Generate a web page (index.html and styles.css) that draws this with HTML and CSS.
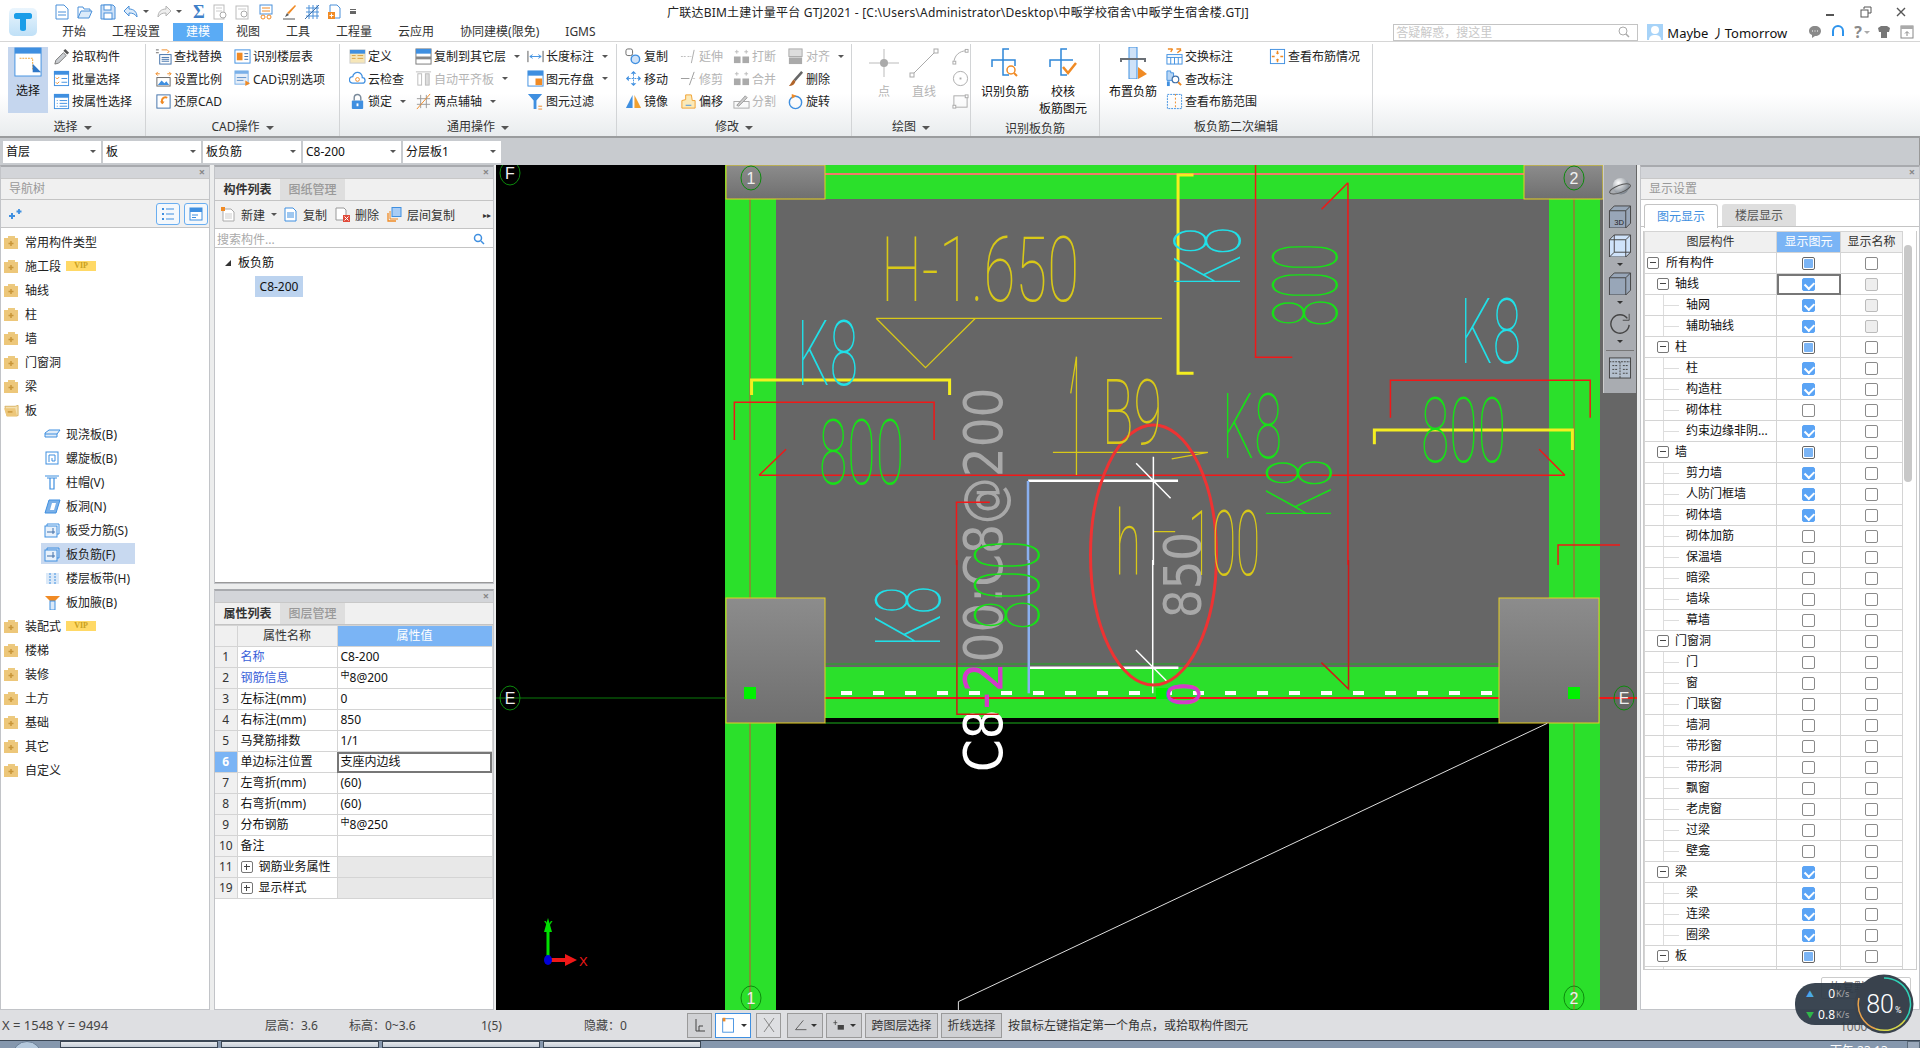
FILE: index.html
```html
<!DOCTYPE html>
<html lang="zh-CN">
<head>
    <meta charset="UTF-8">
    <title>广联达BIM土建计量平台 GTJ2021</title>
    <link rel="stylesheet" href="styles.css">
</head>
<body>
<svg class="sprites" aria-hidden="true">
    <symbol id="i-pick" viewBox="0 0 18 18"><path d="M2 17l1-4 8-8 3 3-8 8z" fill="#c9ccd0" stroke="#777"/><path d="M11 3l2-2 4 4-2 2z" fill="#555"/></symbol>
    <symbol id="i-batch" viewBox="0 0 18 18"><rect x="1.5" y="1.5" width="15" height="15" fill="#fff" stroke="#3f8fe0"/><rect x="1" y="1" width="16" height="4" fill="#3f8fe0"/><path d="M3 8l1.5 1.500 2-2M3 13l1.500 1.500 2-2" fill="none" stroke="#f08a24"/><path d="M9 9h6M9 13h6" stroke="#3f8fe0"/></symbol>
    <symbol id="i-attr" viewBox="0 0 18 18"><rect x="1.500" y="1.500" width="15" height="15" fill="#fff" stroke="#3f8fe0"/><rect x="1" y="1" width="16" height="4" fill="#3f8fe0"/><path d="M4 8h1M4 11h1M4 14h1M7 8h8M7 11h8M7 14h8" stroke="#3f8fe0"/></symbol>
    <symbol id="i-find" viewBox="0 0 18 18"><path d="M1 2h3M1 5h3" stroke="#666"/><path d="M7 2h6l2 2-2 1" fill="none" stroke="#f08a24"/><rect x="5" y="7" width="12" height="10" fill="#fff" stroke="#3f6fa8"/><path d="M7 10h8M7 12h8M7 14h8" stroke="#3f6fa8"/></symbol>
    <symbol id="i-scale" viewBox="0 0 18 18"><path d="M1 4h4M3 2l-2 2 2 2M17 4h-4M15 2l2 2-2 2" fill="none" stroke="#f08a24"/><rect x="2" y="8" width="14" height="9" fill="#fff" stroke="#666"/><path d="M3 16l4-5 3 3 2-2 3 4z" fill="#3f8fe0"/></symbol>
    <symbol id="i-restore" viewBox="0 0 18 18"><rect x="2" y="2" width="14" height="14" fill="#fff" stroke="#3f6fa8"/><path d="M13 5c-4-2-7 2-5 6" fill="none" stroke="#f08a24" stroke-width="2"/><path d="M5 9l3 3 2-3z" fill="#f08a24"/></symbol>
    <symbol id="i-floor" viewBox="0 0 18 18"><rect x="1" y="2" width="16" height="14" fill="#fff" stroke="#3f8fe0"/><rect x="3" y="5" width="6" height="8" fill="#f08a24"/><path d="M11 6h4M11 9h4M11 12h4" stroke="#3f6fa8"/></symbol>
    <symbol id="i-cad" viewBox="0 0 18 18"><rect x="1" y="1" width="14" height="14" fill="#e6eef8" stroke="#7ab0e8"/><rect x="1" y="1" width="14" height="3" fill="#7ab0e8"/><path d="M3 8h10M3 11h7" stroke="#5a8fca"/><path d="M12 11l5 3-5 3z" fill="#f08a24"/></symbol>
    <symbol id="i-define" viewBox="0 0 18 18"><rect x="1" y="2" width="16" height="14" fill="#f6e6b8" stroke="#ccc"/><rect x="1" y="2" width="16" height="4" fill="#3f8fe0"/><path d="M9 8h6M9 11h6M3 8h4M3 11h4" stroke="#d8a040"/></symbol>
    <symbol id="i-cloud" viewBox="0 0 18 18"><path d="M4 14a3.500 3.500 0 0 1 0-7 5 5 0 0 1 10 1 3 3 0 0 1 0 6z" fill="#fff" stroke="#3f8fe0" stroke-width="1.300"/><circle cx="9" cy="10" r="2" fill="none" stroke="#f08a24"/></symbol>
    <symbol id="i-lock" viewBox="0 0 18 18"><rect x="3" y="8" width="12" height="9" rx="1" fill="#3f8fe0"/><path d="M5.500 8V5a3.500 3.500 0 0 1 7 0v3" fill="none" stroke="#7a8a9a" stroke-width="1.500"/><rect x="8" y="11" width="2" height="3" fill="#fff"/></symbol>
    <symbol id="i-copyto" viewBox="0 0 18 18"><rect x="1" y="1" width="16" height="16" fill="#fff" stroke="#777"/><rect x="1" y="1" width="16" height="5" fill="#3f8fe0"/><rect x="1" y="9" width="16" height="3" fill="#888"/></symbol>
    <symbol id="i-align" viewBox="0 0 18 18"><path d="M1 2h16" stroke="#bbb"/><rect x="3" y="4" width="4" height="12" fill="none" stroke="#bbb"/><rect x="11" y="4" width="4" height="12" fill="#ddd" stroke="#bbb"/></symbol>
    <symbol id="i-axis" viewBox="0 0 18 18"><path d="M2 6h14M2 12h14M6 2v14M12 2v14" stroke="#999"/><path d="M2 17L16 1" stroke="#f08a24"/></symbol>
    <symbol id="i-dim" viewBox="0 0 18 18"><path d="M1 3v12M17 3v12" stroke="#555"/><path d="M3 9h12M3 9l3-2M3 9l3 2M15 9l-3-2M15 9l-3 2" stroke="#3f8fe0" fill="none"/></symbol>
    <symbol id="i-savepic" viewBox="0 0 18 18"><rect x="1" y="1" width="16" height="16" fill="#fff" stroke="#3f8fe0"/><rect x="1" y="1" width="16" height="5" fill="#3f8fe0"/><rect x="9" y="9" width="7" height="7" fill="#f08a24"/></symbol>
    <symbol id="i-filter" viewBox="0 0 18 18"><path d="M1 1h15l-6 7v9h-3V8z" fill="#3f8fe0"/><path d="M12 14h4M12 17h4" stroke="#f08a24"/></symbol>
    <symbol id="i-copy" viewBox="0 0 18 18"><rect x="1" y="1" width="7" height="7" rx="2" fill="#fff" stroke="#666"/><circle cx="11" cy="12" r="4.500" fill="#cfe2f8" stroke="#3f8fe0" stroke-width="1.500"/></symbol>
    <symbol id="i-move" viewBox="0 0 18 18"><path d="M9 1l3 3H6zM9 17l-3-3h6zM1 9l3-3v6zM17 9l-3 3V6z" fill="#3f8fe0"/><path d="M9 4v10M4 9h10" stroke="#3f8fe0" stroke-dasharray="2 1"/></symbol>
    <symbol id="i-mirror" viewBox="0 0 18 18"><path d="M8 2v14H1z" fill="#3f8fe0"/><path d="M10 2v14h7z" fill="#f0a030"/></symbol>
    <symbol id="i-extend" viewBox="0 0 18 18"><path d="M1 9h5M8 9h4" stroke="#bbb" stroke-dasharray="2 1"/><path d="M15 2l-3 14" stroke="#aaa"/></symbol>
    <symbol id="i-trim" viewBox="0 0 18 18"><path d="M1 9h9" stroke="#999"/><path d="M15 2l-5 14" stroke="#999"/><path d="M12 9h4" stroke="#ccc"/></symbol>
    <symbol id="i-offset" viewBox="0 0 18 18"><path d="M2 16V8l4-1V2h6l1 6h3v8z" fill="#fbe9b8" stroke="#f0a030"/><path d="M6 13h6" stroke="#3f8fe0"/></symbol>
    <symbol id="i-break" viewBox="0 0 18 18"><rect x="1" y="9" width="7" height="7" fill="#aaa"/><rect x="10" y="9" width="7" height="7" fill="#aaa"/><path d="M4 2v4M2 4h4M14 2v4M12 4h4" stroke="#bbb"/></symbol>
    <symbol id="i-split" viewBox="0 0 18 18"><rect x="1" y="9" width="16" height="7" fill="none" stroke="#aaa"/><path d="M4 13l9-10 2 2-9 9z" fill="#ccc" stroke="#999"/></symbol>
    <symbol id="i-alignr" viewBox="0 0 18 18"><rect x="2" y="1" width="14" height="8" fill="#ddd" stroke="#aaa"/><rect x="2" y="10" width="14" height="7" fill="#aaa"/></symbol>
    <symbol id="i-del" viewBox="0 0 18 18"><path d="M15 1l2 2-8 9-2-2z" fill="#666"/><path d="M7 10l2 2c-1 4-4 5-7 5 2-2 3-5 5-7z" fill="#b0642a"/></symbol>
    <symbol id="i-rotate" viewBox="0 0 18 18"><circle cx="9" cy="10" r="6.500" fill="none" stroke="#3f8fe0" stroke-width="1.500"/><path d="M5 1l5 2-5 3z" fill="#f08a24"/></symbol>
    <symbol id="i-arc" viewBox="0 0 18 18"><path d="M2 16C2 8 8 3 15 3" fill="none" stroke="#aaa"/><rect x="1" y="14" width="3" height="3" fill="#fff" stroke="#aaa"/><rect x="14" y="1.500" width="3" height="3" fill="#fff" stroke="#aaa"/></symbol>
    <symbol id="i-circle" viewBox="0 0 18 18"><circle cx="9" cy="9" r="7.500" fill="none" stroke="#aaa"/><rect x="8" y="8" width="2" height="2" fill="#aaa"/></symbol>
    <symbol id="i-rect" viewBox="0 0 18 18"><rect x="2" y="3" width="14" height="12" fill="none" stroke="#aaa"/><rect x="1" y="13" width="3" height="3" fill="#fff" stroke="#aaa"/><rect x="14" y="2" width="3" height="3" fill="#fff" stroke="#aaa"/></symbol>
    <symbol id="i-swap" viewBox="0 0 18 18"><path d="M2 1h5M7 1l-2 3M16 1h-5M12 5l4-3" fill="none" stroke="#f08a24" stroke-width="1.500"/><rect x="1" y="7" width="16" height="10" fill="#fff" stroke="#3f8fe0"/><path d="M1 10h16M5 10v7M9 10v7M13 10v7" stroke="#3f8fe0"/></symbol>
    <symbol id="i-check" viewBox="0 0 18 18"><path d="M1 1h4v2h3v8H1z" fill="#b8d6f5" stroke="#3f8fe0"/><path d="M1 12h3v5H1z" fill="#3f8fe0"/><circle cx="10" cy="10" r="3.500" fill="#fff" stroke="#3f6fa8" stroke-width="1.300"/><path d="M13 13l3 3" stroke="#f08a24" stroke-width="2"/></symbol>
    <symbol id="i-range" viewBox="0 0 18 18"><rect x="1.500" y="1.500" width="15" height="15" fill="none" stroke="#3f8fe0" stroke-dasharray="2 1"/><path d="M10 1v16" stroke="#f08a24" stroke-dasharray="2 2"/></symbol>
    <symbol id="i-state" viewBox="0 0 18 18"><rect x="1.500" y="1.500" width="15" height="15" fill="#fff" stroke="#3f8fe0"/><path d="M9 3v3M9 12v3M3 9h3M12 9h3" stroke="#f08a24" stroke-width="1.500"/><path d="M9 7l-2-2h4zM9 11l-2 2h4z" fill="#f08a24"/></symbol>
    <symbol id="i-folder" viewBox="0 0 15 13"><rect x="4" y="0" width="7" height="2" fill="#ecca80"/><rect x="0" y="2" width="14" height="11" fill="#edc77a"/><path d="M7 5v5M4.500 7.500h5" stroke="#c89538" stroke-width="1.500"/></symbol>
    <symbol id="i-folderopen" viewBox="0 0 16 13"><path d="M1 2h11l3-1v11H3z" fill="#f4e0b0" stroke="#d9b262"/><path d="M0 4h12l2 9H3z" fill="#edc77a"/><path d="M4 8h5" stroke="#c89538" stroke-width="1.500"/></symbol>
    <symbol id="i-slab" viewBox="0 0 17 15"><path d="M1 6l4-3h11l-3 4v3H1z" fill="#e0ecf8" stroke="#3f8fe0"/><path d="M1 7h12" stroke="#3f8fe0"/></symbol>
    <symbol id="i-spiral" viewBox="0 0 17 15"><rect x="2" y="1" width="12" height="12" fill="#fff" stroke="#3f8fe0"/><path d="M5 11V4h6v6H8V7" fill="none" stroke="#3f8fe0"/></symbol>
    <symbol id="i-cap" viewBox="0 0 17 15"><path d="M1 1h14M3 3h10M6 3v11h4V3" fill="none" stroke="#3f8fe0" stroke-width="1.200"/></symbol>
    <symbol id="i-hole" viewBox="0 0 17 15"><path d="M1 14L5 1h11l-4 13z" fill="#7ab0e8" stroke="#3f8fe0"/><path d="M6 11l2-7h4l-2 7z" fill="#fff"/></symbol>
    <symbol id="i-rebar" viewBox="0 0 17 15"><rect x="1" y="3" width="12" height="11" fill="#e8f1fb" stroke="#3f8fe0"/><path d="M3 3V1h12v10h-2" fill="none" stroke="#3f8fe0"/><path d="M3 9h8M9 5v6" stroke="#3f6fa8"/></symbol>
    <symbol id="i-band" viewBox="0 0 17 15"><rect x="2" y="2" width="13" height="11" fill="#dbe9f8"/><path d="M6 2v11M11 2v11" stroke="#3f8fe0" stroke-dasharray="2 1"/></symbol>
    <symbol id="i-haunch" viewBox="0 0 17 15"><path d="M1 1h15l-5 5H6z" fill="#f08a24"/><rect x="6" y="6" width="5" height="9" fill="#dbe9f8" stroke="#3f8fe0"/></symbol>
    <symbol id="i-new" viewBox="0 0 15 15"><path d="M2 2h8l3 3v9H2z" fill="#fff" stroke="#aaa"/><path d="M4 7h7M4 9h7M4 11h7" stroke="#ccc"/><rect x="0" y="0" width="4" height="4" fill="#f08a24"/></symbol>
    <symbol id="i-doc" viewBox="0 0 15 15"><path d="M2 1h8l3 3v10H2z" fill="#fff" stroke="#3f8fe0"/><path d="M4 6h7M4 8h7M4 10h7" stroke="#3f8fe0"/></symbol>
    <symbol id="i-remove" viewBox="0 0 15 15"><path d="M1 1h8l2 2v10H1z" fill="#fff" stroke="#999"/><rect x="8" y="8" width="7" height="7" fill="#e04a3a"/><path d="M9.500 9.500l4 4M13.500 9.500l-4 4" stroke="#fff"/></symbol>
    <symbol id="i-floorcopy" viewBox="0 0 15 15"><path d="M1 6v8h8" fill="none" stroke="#f08a24" stroke-width="1.300"/><path d="M3 4v8h8" fill="none" stroke="#f08a24"/><rect x="5" y="0.500" width="9" height="9" fill="#a9cdf6" stroke="#3f8fe0"/></symbol>
</svg>

<header class="titlebar">
    <div class="quick">
        <svg class="qi" viewBox="0 0 16 16"><path d="M2 1h8l4 4v10H2z" fill="#fff" stroke="#4a90d9"/><path d="M4 8h8M4 11h8" stroke="#4a90d9"/></svg>
        <svg class="qi" viewBox="0 0 16 16"><path d="M1 14V3h5l1 2h6v2" fill="none" stroke="#4a90d9"/><path d="M1 14l3-7h11l-3 7z" fill="#dcebfa" stroke="#4a90d9"/></svg>
        <svg class="qi" viewBox="0 0 16 16"><path d="M1 1h12l2 2v12H1z" fill="#cfe2f8" stroke="#4a90d9"/><rect x="4" y="1" width="7" height="5" fill="#fff" stroke="#4a90d9"/><rect x="4" y="9" width="8" height="6" fill="#fff" stroke="#4a90d9"/></svg>
        <svg class="qi" viewBox="0 0 16 16"><path d="M6 2L1 7l5 5V9c4 0 6 1 8 4 0-5-3-8-8-8z" fill="#dcebfa" stroke="#4a90d9"/></svg>
        <span class="caret qc1"></span>
        <svg class="qi" viewBox="0 0 16 16"><path d="M10 2l5 5-5 5V9C6 9 4 10 2 13c0-5 3-8 8-8z" fill="#eee" stroke="#b5b5b5"/></svg>
        <span class="caret qc2"></span>
        <span class="qs">Σ</span>
        <svg class="qi" viewBox="0 0 16 16"><rect x="2" y="1" width="10" height="14" fill="#fff" stroke="#bbb"/><path d="M4 4h6M4 7h6" stroke="#ccc"/><circle cx="11" cy="11" r="3" fill="#fff" stroke="#aaa"/></svg>
        <svg class="qi" viewBox="0 0 16 16"><rect x="1" y="2" width="12" height="13" fill="#fff" stroke="#bbb"/><path d="M3 5h8" stroke="#ccc"/><circle cx="9" cy="10" r="3" fill="#fff" stroke="#aaa"/></svg>
        <svg class="qi" viewBox="0 0 16 16"><rect x="2" y="1" width="12" height="9" fill="#fff" stroke="#4a90d9"/><path d="M4 4h8M4 7h8" stroke="#f08a24"/><circle cx="5" cy="13" r="2" fill="none" stroke="#f08a24"/><circle cx="11" cy="13" r="2" fill="none" stroke="#f08a24"/></svg>
        <svg class="qi" viewBox="0 0 16 16"><path d="M14 1l1 1-7 8-2-1z" fill="#f08a24"/><path d="M2 15h12" stroke="#555"/><path d="M6 9l2 2-4 2z" fill="#555"/></svg>
        <svg class="qi" viewBox="0 0 16 16"><path d="M2 4h13M2 8h13M2 12h13M5 1v14M9 1v14M13 1v14" stroke="#4a90d9"/><path d="M1 15L15 1" stroke="#3f6fa8"/></svg>
        <svg class="qi" viewBox="0 0 16 16"><path d="M3 1h7l3 3v10H3z" fill="#fff" stroke="#4a90d9"/><rect x="1" y="8" width="7" height="7" fill="#f08a24"/><path d="M4.500 9.500v4M2.500 11.500h4" stroke="#fff"/></svg>
        <span class="qm"></span>
    </div>
    <div class="apptitle">广联达BIM土建计量平台 GTJ2021 - [C:\Users\Administrator\Desktop\中畈学校宿舍\中畈学生宿舍楼.GTJ]</div>
    <div class="winbtns">
        <svg viewBox="0 0 12 12"><rect x="1" y="8" width="8" height="2" fill="#555"/></svg>
        <svg viewBox="0 0 12 12"><path d="M4 3V1h7v6H8" fill="none" stroke="#555"/><rect x="1" y="4" width="7" height="7" fill="none" stroke="#555"/></svg>
        <svg viewBox="0 0 12 12"><path d="M2 2l8 8M10 2l-8 8" stroke="#555" stroke-width="1.400"/></svg>
    </div>
</header>

<svg class="logo" viewBox="0 0 28 28"><defs><linearGradient id="lg" x1="0" y1="0" x2="0" y2="1"><stop offset="0" stop-color="#eaf5fd"/><stop offset="1" stop-color="#bfe0f7"/></linearGradient></defs><rect width="28" height="28" rx="5" fill="url(#lg)"/><path d="M5 7c0-1 1-2 2-2h14c1 0 2 1 2 2v2c0 1-1 2-2 2h-4v10c0 1-1 2-3 2s-3-1-3-2V11H7c-1 0-2-1-2-2z" fill="#1a9de8"/></svg>

<nav class="tabs">
    <a>开始</a><a>工程设置</a><a class="active">建模</a><a>视图</a><a>工具</a><a>工程量</a><a>云应用</a><a>协同建模(限免)</a><a>IGMS</a>
    <div class="tabs-right">
        <div class="helpbox"><span>答疑解惑，搜这里</span><svg viewBox="0 0 12 12"><circle cx="5" cy="5" r="4" fill="none" stroke="#aaa"/><path d="M8 8l3 3" stroke="#aaa" stroke-width="1.500"/></svg></div>
        <svg class="avatar" viewBox="0 0 16 16"><rect width="16" height="16" fill="#a7d3f8"/><circle cx="8" cy="6" r="4" fill="#fff"/><path d="M2 16c0-4 3-5 6-5s6 1 6 5z" fill="#fff"/></svg>
        <span class="username">Maybe 丿Tomorrow</span>
        <svg class="ti" viewBox="0 0 14 14"><path d="M7 1c3.500 0 6 2 6 5s-2.500 5-6 5l-3 2v-3C2 9 1 8 1 6c0-3 2.500-5 6-5z" fill="#8a8a8a"/><path d="M4 6h1M6.500 6h1M9 6h1" stroke="#fff"/></svg>
        <svg class="ti" viewBox="0 0 14 14"><path d="M2 8V6a5 5 0 0 1 10 0v2" fill="none" stroke="#2e94ec" stroke-width="2"/><rect x="1" y="7" width="2" height="4" fill="#2e94ec"/><rect x="11" y="7" width="2" height="4" fill="#2e94ec"/></svg>
        <span class="qmark">?</span><span class="caret"></span>
        <svg class="ti" viewBox="0 0 14 14"><path d="M1 3l3-2h6l3 2-1 4h-2v6H4V7H2z" fill="#777"/></svg>
        <svg class="ti" viewBox="0 0 14 14"><rect x="1" y="1" width="12" height="12" fill="none" stroke="#888"/><rect x="1" y="1" width="12" height="3" fill="#aaa"/><path d="M7 11V7M5 8.500L7 6.500 9 8.500" fill="none" stroke="#888"/></svg>
    </div>
</nav>

<section class="ribbon">
    <div class="rgroup g1">
        <div class="rbody">
            <div class="bigbtn selected">
                <svg viewBox="0 0 30 32"><rect x="1" y="1" width="28" height="30" fill="#fff" stroke="#3f8fe0"/><rect x="1" y="1" width="28" height="6" fill="#3f8fe0"/><path d="M6 12h14v12" fill="none" stroke="#f0a030" stroke-dasharray="2 1"/><path d="M20 18l9 9h-9z" fill="#2f78c8"/></svg>
                <span>选择</span>
            </div>
            <div class="rcol c-a">
                <div class="ritem"><svg><use href="#i-pick"/></svg>拾取构件</div>
                <div class="ritem"><svg><use href="#i-batch"/></svg>批量选择</div>
                <div class="ritem"><svg><use href="#i-attr"/></svg>按属性选择</div>
            </div>
        </div>
        <div class="rlabel">选择<i class="caret"></i></div>
    </div>
    <div class="rgroup g2">
        <div class="rbody">
            <div class="rcol c2a">
                <div class="ritem"><svg><use href="#i-find"/></svg>查找替换</div>
                <div class="ritem"><svg><use href="#i-scale"/></svg>设置比例</div>
                <div class="ritem"><svg><use href="#i-restore"/></svg>还原CAD</div>
            </div>
            <div class="rcol">
                <div class="ritem"><svg><use href="#i-floor"/></svg>识别楼层表</div>
                <div class="ritem"><svg><use href="#i-cad"/></svg>CAD识别选项</div>
            </div>
        </div>
        <div class="rlabel">CAD操作<i class="caret"></i></div>
    </div>
    <div class="rgroup g3">
        <div class="rbody">
            <div class="rcol c3a">
                <div class="ritem"><svg><use href="#i-define"/></svg>定义</div>
                <div class="ritem"><svg><use href="#i-cloud"/></svg>云检查</div>
                <div class="ritem"><svg><use href="#i-lock"/></svg>锁定<i class="caret"></i></div>
            </div>
            <div class="rcol c3b">
                <div class="ritem"><svg><use href="#i-copyto"/></svg>复制到其它层<i class="caret"></i></div>
                <div class="ritem off"><svg><use href="#i-align"/></svg>自动平齐板<i class="caret"></i></div>
                <div class="ritem"><svg><use href="#i-axis"/></svg>两点辅轴<i class="caret"></i></div>
            </div>
            <div class="rcol">
                <div class="ritem"><svg><use href="#i-dim"/></svg>长度标注<i class="caret"></i></div>
                <div class="ritem"><svg><use href="#i-savepic"/></svg>图元存盘<i class="caret"></i></div>
                <div class="ritem"><svg><use href="#i-filter"/></svg>图元过滤</div>
            </div>
        </div>
        <div class="rlabel">通用操作<i class="caret"></i></div>
    </div>
    <div class="rgroup g4">
        <div class="rbody">
            <div class="rcol c4a">
                <div class="ritem"><svg><use href="#i-copy"/></svg>复制</div>
                <div class="ritem"><svg><use href="#i-move"/></svg>移动</div>
                <div class="ritem"><svg><use href="#i-mirror"/></svg>镜像</div>
            </div>
            <div class="rcol c4b">
                <div class="ritem off"><svg><use href="#i-extend"/></svg>延伸</div>
                <div class="ritem off"><svg><use href="#i-trim"/></svg>修剪</div>
                <div class="ritem"><svg><use href="#i-offset"/></svg>偏移</div>
            </div>
            <div class="rcol c4c">
                <div class="ritem off"><svg><use href="#i-break"/></svg>打断</div>
                <div class="ritem off"><svg><use href="#i-break"/></svg>合并</div>
                <div class="ritem off"><svg><use href="#i-split"/></svg>分割</div>
            </div>
            <div class="rcol">
                <div class="ritem off"><svg><use href="#i-alignr"/></svg>对齐<i class="caret"></i></div>
                <div class="ritem"><svg><use href="#i-del"/></svg>删除</div>
                <div class="ritem"><svg><use href="#i-rotate"/></svg>旋转</div>
            </div>
        </div>
        <div class="rlabel">修改<i class="caret"></i></div>
    </div>
    <div class="rgroup g5">
        <div class="rbody">
            <div class="bigbtn drawbtn off">
                <svg viewBox="0 0 30 32"><path d="M15 2v28M0 16h30" stroke="#bbb"/><circle cx="15" cy="16" r="4" fill="#aaa"/></svg>
                <span>点</span>
            </div>
            <div class="bigbtn drawbtn off">
                <svg viewBox="0 0 30 32"><path d="M3 28L27 4" stroke="#aaa"/><rect x="1" y="26" width="4" height="4" fill="#fff" stroke="#aaa"/><rect x="25" y="2" width="4" height="4" fill="#fff" stroke="#aaa"/></svg>
                <span>直线</span>
            </div>
            <div class="rcol drawcol">
                <div class="ritem"><svg><use href="#i-arc"/></svg></div>
                <div class="ritem"><svg><use href="#i-circle"/></svg></div>
                <div class="ritem"><svg><use href="#i-rect"/></svg></div>
            </div>
        </div>
        <div class="rlabel">绘图<i class="caret"></i></div>
    </div>
    <div class="rgroup g6">
        <div class="rbody">
            <div class="bigbtn">
                <svg viewBox="0 0 30 32"><path d="M19 2H13V28H19M2 20V13H25V19" fill="none" stroke="#2e86d8" stroke-width="1.500"/><circle cx="21" cy="23" r="4" fill="#fff" stroke="#f08a24" stroke-width="1.500"/><path d="M24 26l3 3" stroke="#f08a24" stroke-width="2"/></svg>
                <span>识别负筋</span>
            </div>
            <div class="bigbtn">
                <svg viewBox="0 0 30 32"><path d="M19 2H13V28H19M2 20V13H25" fill="none" stroke="#2e86d8" stroke-width="1.500"/><path d="M15 20l5 6 8-10" fill="none" stroke="#f08a24" stroke-width="2.500"/></svg>
                <span>校核<br>板筋图元</span>
            </div>
        </div>
        <div class="rlabel plain">识别板负筋</div>
    </div>
    <div class="rgroup g7">
        <div class="rbody">
            <div class="bigbtn">
                <svg viewBox="0 0 30 32"><rect x="11" y="0" width="8" height="32" fill="#cfe2f8" stroke="#3f8fe0"/><path d="M3 15v-3h24v3" fill="none" stroke="#6a6f75" stroke-width="2"/><path d="M20 20l9 7-9 5z" fill="#f08a24"/></svg>
                <span>布置负筋</span>
            </div>
            <div class="rcol c7a">
                <div class="ritem"><svg><use href="#i-swap"/></svg>交换标注</div>
                <div class="ritem"><svg><use href="#i-check"/></svg>查改标注</div>
                <div class="ritem"><svg><use href="#i-range"/></svg>查看布筋范围</div>
            </div>
            <div class="rcol">
                <div class="ritem"><svg><use href="#i-state"/></svg>查看布筋情况</div>
            </div>
        </div>
        <div class="rlabel plain">板负筋二次编辑</div>
    </div>
</section>

<div class="combobar">
    <div class="combo">首层</div>
    <div class="combo">板</div>
    <div class="combo">板负筋</div>
    <div class="combo">C8-200</div>
    <div class="combo">分层板1</div>
</div>

<main class="workspace">
    <aside class="panel nav">
        <div class="panelhead"><i class="x">×</i></div>
        <div class="paneltitle">导航树</div>
        <div class="navtools">
            <svg class="pin" viewBox="0 0 14 12"><path d="M4 5v6M1 8h6" stroke="#3f8fe0" stroke-width="2"/><path d="M11 1v5M8.500 3.500h5" stroke="#3f8fe0" stroke-width="1.800"/></svg>
            <span class="navbtn"><svg viewBox="0 0 14 14"><path d="M1 2h2M1 7h2M1 12h2" stroke="#3f8fe0" stroke-width="2"/><path d="M5 2h8M5 7h8M5 12h8" stroke="#3f8fe0"/></svg></span>
            <span class="navbtn"><svg viewBox="0 0 14 14"><rect x="1" y="1" width="12" height="12" fill="#fff" stroke="#3f8fe0"/><rect x="1" y="1" width="12" height="4" fill="#3f8fe0"/><path d="M3 8h6M3 10.500h4" stroke="#3f8fe0"/></svg></span>
        </div>
        <ul class="navtree">
            <li><svg><use href="#i-folder"/></svg>常用构件类型</li>
            <li><svg><use href="#i-folder"/></svg>施工段<b class="vip">VIP</b></li>
            <li><svg><use href="#i-folder"/></svg>轴线</li>
            <li><svg><use href="#i-folder"/></svg>柱</li>
            <li><svg><use href="#i-folder"/></svg>墙</li>
            <li><svg><use href="#i-folder"/></svg>门窗洞</li>
            <li><svg><use href="#i-folder"/></svg>梁</li>
            <li><svg><use href="#i-folderopen"/></svg>板</li>
            <li class="sub"><svg><use href="#i-slab"/></svg>现浇板(B)</li>
            <li class="sub"><svg><use href="#i-spiral"/></svg>螺旋板(B)</li>
            <li class="sub"><svg><use href="#i-cap"/></svg>柱帽(V)</li>
            <li class="sub"><svg><use href="#i-hole"/></svg>板洞(N)</li>
            <li class="sub"><svg><use href="#i-rebar"/></svg>板受力筋(S)</li>
            <li class="sub current"><svg><use href="#i-rebar"/></svg>板负筋(F)</li>
            <li class="sub"><svg><use href="#i-band"/></svg>楼层板带(H)</li>
            <li class="sub"><svg><use href="#i-haunch"/></svg>板加腋(B)</li>
            <li><svg><use href="#i-folder"/></svg>装配式<b class="vip">VIP</b></li>
            <li><svg><use href="#i-folder"/></svg>楼梯</li>
            <li><svg><use href="#i-folder"/></svg>装修</li>
            <li><svg><use href="#i-folder"/></svg>土方</li>
            <li><svg><use href="#i-folder"/></svg>基础</li>
            <li><svg><use href="#i-folder"/></svg>其它</li>
            <li><svg><use href="#i-folder"/></svg>自定义</li>
        </ul>
    </aside>

    <div class="midcol">
        <section class="panel comps">
            <div class="panelhead"><i class="x">×</i></div>
            <div class="paneltabs"><span class="on">构件列表</span><span>图纸管理</span></div>
            <div class="comptools">
                <span class="t1"><svg><use href="#i-new"/></svg>新建<i class="caret"></i></span>
                <span class="t2"><svg><use href="#i-doc"/></svg>复制</span>
                <span class="t3"><svg><use href="#i-remove"/></svg>删除</span>
                <span class="t4"><svg><use href="#i-floorcopy"/></svg>层间复制</span>
                <em class="more">▸▸</em>
            </div>
            <div class="compsearch"><span>搜索构件...</span><svg viewBox="0 0 12 12"><circle cx="5" cy="5" r="3.500" fill="none" stroke="#3f8fe0" stroke-width="1.500"/><path d="M8 8l3 3" stroke="#3f8fe0" stroke-width="1.500"/></svg></div>
            <div class="comptree">
                <div class="troot"><i class="tri"></i>板负筋</div>
                <div class="tleaf"><span>C8-200</span></div>
            </div>
        </section>
        <section class="panel props">
            <div class="panelhead"><i class="x">×</i></div>
            <div class="paneltabs"><span class="on">属性列表</span><span>图层管理</span></div>
            <table class="proptable">
                <colgroup><col class="pc1"><col class="pc2"><col class="pc3"></colgroup>
                <tr class="phead"><th></th><th>属性名称</th><th class="sel">属性值</th></tr>
                <tr><td class="n">1</td><td class="link">名称</td><td>C8-200</td></tr>
                <tr><td class="n">2</td><td class="link">钢筋信息</td><td><sup class="steel">中</sup>8@200</td></tr>
                <tr><td class="n">3</td><td>左标注(mm)</td><td>0</td></tr>
                <tr><td class="n">4</td><td>右标注(mm)</td><td>850</td></tr>
                <tr><td class="n">5</td><td>马凳筋排数</td><td>1/1</td></tr>
                <tr><td class="n cur">6</td><td>单边标注位置</td><td class="editing">支座内边线</td></tr>
                <tr><td class="n">7</td><td>左弯折(mm)</td><td>(60)</td></tr>
                <tr><td class="n">8</td><td>右弯折(mm)</td><td>(60)</td></tr>
                <tr><td class="n">9</td><td>分布钢筋</td><td><sup class="steel">中</sup>8@250</td></tr>
                <tr><td class="n">10</td><td>备注</td><td></td></tr>
                <tr><td class="n">11</td><td><i class="exp plus"></i>钢筋业务属性</td><td class="grey"></td></tr>
                <tr><td class="n">19</td><td><i class="exp plus"></i>显示样式</td><td class="grey"></td></tr>
            </table>
        </section>
    </div>

    <div class="canvas">
        <svg class="cad" viewBox="496 165 1141 845">
            <defs>
                <linearGradient id="colfill" x1="0" y1="0" x2="0" y2="1"><stop offset="0" stop-color="#8c8c8c"/><stop offset="1" stop-color="#6f6f6f"/></linearGradient>
            </defs>
            <rect x="496" y="165" width="1141" height="845" fill="#000"/>
            <rect x="1600" y="165" width="37" height="845" fill="#666"/>
            <rect x="725" y="165" width="51" height="845" fill="#2be02b"/>
            <rect x="1549" y="165" width="51" height="845" fill="#2be02b"/>
            <rect x="776" y="199" width="773" height="468" fill="#666"/>
            <rect x="725" y="165" width="875" height="34" fill="#2be02b"/>
            <rect x="825" y="667" width="674" height="51" fill="#2be02b"/>
            <path class="ln" d="M825 664H1499M825 723H1499" stroke="#1cb01c"/>
            <path class="ln" d="M825 174H1524" stroke="#f07a6a" stroke-width="2"/>
            <path class="ln" d="M750 165V1010M1574 165V1010" stroke="#d04a3a"/>
            <path class="ln" d="M496 698H726" stroke="#0a7a0a"/>
            <path class="ln" d="M825 698H1637" stroke="#f01818" stroke-width="2"/>
            <path class="ln" d="M841 693H1495" stroke="#fff" stroke-width="4" stroke-dasharray="11 21"/>

            <rect class="col" x="726" y="165" width="99" height="34"/>
            <rect class="col" x="1524" y="165" width="79" height="34"/>
            <rect class="col" x="726" y="598" width="99" height="125"/>
            <rect class="col" x="1499" y="598" width="100" height="125"/>
            <rect x="744" y="687" width="12" height="12" fill="#00f000"/>
            <rect x="1568" y="687" width="12" height="12" fill="#00f000"/>
            <rect x="1156" y="688" width="12" height="11" fill="#00f000"/>

            <!-- big rotated notes sit under the linework -->
            <text class="big" transform="translate(1002 772) rotate(-90) scale(1 1.15)" font-size="47"><tspan fill="#fff">C8</tspan><tspan fill="#d23cc8">-2</tspan><tspan fill="#a8a8a8">00:C8@200</tspan></text>
            <text class="big" transform="translate(1201 618) rotate(-90) scale(1 1.15)" font-size="45" fill="#a8a8a8">850</text>
            <text class="big" transform="translate(1200 707) rotate(-90) scale(1 1.1)" font-size="40" fill="#d23cc8">0</text>

            <!-- zoom-space linework, slab top half -->
            <g transform="translate(720 165) scale(.574 .3333)">
                <path class="ln" d="M933 0V577H997M1094 53V1200M1094 53L1048 133M25 825V712H373V825M1168 758V646H1516V758M68 931H1472M68 931L115 853M1472 931L1427 853M412 1200V1012H470M1460 1200V1140H1568" stroke="#f01818" stroke-width="1.500"/>
                <path class="ln" d="M825 30H798V625H825M55 690V645H400V690M1140 838V795H1485V855" stroke="#f4ee20" stroke-width="3"/>
                <path class="ln" d="M272 460H770M272 460L358 608L445 460M621 930V575L611 685M580 862H850L787 882M755 1100H793" stroke="#d8c818" stroke-width="1.300"/>
                <path class="ln" d="M537 947H798" stroke="#fff" stroke-width="2.500"/>
                <path class="ln" d="M725 895L785 1000M755 875V1200" stroke="#fff" stroke-width="1.500"/>
            </g>
            <g transform="translate(500 560) scale(.7334 .3333)">
                <path class="ln" d="M1157 0V387L1120 308M623 0V463H680" stroke="#d01818" stroke-width="1.500"/>
                <path class="ln" d="M722 323H925" stroke="#fff" stroke-width="2.500"/>
                <path class="ln" d="M721 0V400" stroke="#8ab0f0" stroke-width="2.500"/>
                <path class="ln" d="M890 0V400M867 270L910 365" stroke="#fff" stroke-width="1.500"/>
                <path class="ln" d="M1428 490L625 1325V1350" stroke="#ddd"/>
            </g>
            <path class="ln" d="M1028 481V560" stroke="#8ab0f0" stroke-width="2.500"/>
            <ellipse class="ln" cx="1153.500" cy="555" rx="63" ry="130" stroke="#ee3333" stroke-width="3"/>

            <text class="thin yel" x="881" y="301" font-size="90" textLength="198" lengthAdjust="spacingAndGlyphs">H-1.650</text>
            <text class="thin yel" x="1102" y="444" font-size="90" textLength="60" lengthAdjust="spacingAndGlyphs">B9</text>
            <text class="thin yel" x="1115" y="575" font-size="90" textLength="26" lengthAdjust="spacingAndGlyphs">h</text>
            <text class="thin yel" x="1188" y="575" font-size="90" textLength="72" lengthAdjust="spacingAndGlyphs">100</text>
            <text class="thin cy" x="797" y="385" font-size="90" textLength="61" lengthAdjust="spacingAndGlyphs">K8</text>
            <text class="thin cy" x="1460" y="363" font-size="90" textLength="61" lengthAdjust="spacingAndGlyphs">K8</text>
            <text class="thin gr" x="1222" y="458" font-size="90" textLength="60" lengthAdjust="spacingAndGlyphs">K8</text>
            <text class="thin gr" x="819" y="484" font-size="90" textLength="85" lengthAdjust="spacingAndGlyphs">800</text>
            <text class="thin gr" x="1421" y="462" font-size="90" textLength="85" lengthAdjust="spacingAndGlyphs">800</text>
            <text class="thin cy" transform="rotate(-90 1240 287)" x="1240" y="287" font-size="92" textLength="60" lengthAdjust="spacingAndGlyphs">K8</text>
            <text class="thin gr" transform="rotate(-90 1331 519)" x="1331" y="519" font-size="90" textLength="60" lengthAdjust="spacingAndGlyphs">K8</text>
            <text class="thin cy" transform="rotate(-90 940 647)" x="940" y="647" font-size="90" textLength="61" lengthAdjust="spacingAndGlyphs">K8</text>
            <text class="thin gr" transform="rotate(-90 1337 327)" x="1337" y="327" font-size="90" textLength="84" lengthAdjust="spacingAndGlyphs">800</text>
            <text class="thin gr" transform="rotate(-90 1039 630)" x="1039" y="630" font-size="90" textLength="90" lengthAdjust="spacingAndGlyphs">800</text>

            <g class="axis">
                <ellipse cx="751" cy="178" rx="10" ry="12"/><text x="751" y="184">1</text>
                <ellipse cx="1574" cy="178" rx="10" ry="12"/><text x="1574" y="184">2</text>
                <ellipse cx="751" cy="998" rx="10" ry="12"/><text x="751" y="1004">1</text>
                <ellipse cx="1574" cy="998" rx="10" ry="12"/><text x="1574" y="1004">2</text>
                <ellipse cx="510" cy="698" rx="10" ry="12"/><text x="510" y="704">E</text>
                <ellipse cx="1624" cy="698" rx="10" ry="12"/><text x="1624" y="704">E</text>
                <ellipse cx="510" cy="173" rx="10" ry="12"/><text x="510" y="179">F</text>
            </g>

            <path d="M548 960V930" stroke="#00e000" stroke-width="3"/>
            <path d="M548 918l-4 14h8z" fill="#00e000"/>
            <path d="M548 960H566" stroke="#f01818" stroke-width="4"/>
            <path d="M577 960l-12-6v12z" fill="#f01818"/>
            <ellipse cx="548" cy="960" rx="4" ry="5" fill="#0000d8"/>
            <text class="axlbl" x="544" y="930" fill="#00e000">Y</text>
            <text class="axlbl" x="579" y="966" fill="#f01818">X</text>
        </svg>

        <div class="viewtools">
            <svg viewBox="0 0 24 24" class="vt1"><defs><radialGradient id="ball" cx=".35" cy=".3" r=".8"><stop offset="0" stop-color="#fff"/><stop offset="1" stop-color="#6d7680"/></radialGradient></defs><circle cx="13" cy="10" r="9" fill="url(#ball)"/><ellipse cx="12" cy="13" rx="12" ry="4" fill="none" stroke="#555" transform="rotate(-20 12 13)"/></svg>
            <svg viewBox="0 0 24 24" class="vt2"><path d="M1 6l5-5h17v18l-5 5H1z" fill="#98a6b8" stroke="#444"/><path d="M1 6h17v18M18 6l5-5" fill="none" stroke="#444"/><text x="6" y="21" font-size="8" fill="#222" font-family="Liberation Sans">3D</text></svg>
            <svg viewBox="0 0 24 24" class="vt2"><path d="M1 6l5-5h17v18l-5 5H1z" fill="#cfe3fa" stroke="#444"/><path d="M1 6h17v18M18 6l5-5M1 24l5-5h17M6 1v18" fill="none" stroke="#444"/></svg>
            <i class="caret"></i>
            <svg viewBox="0 0 24 24" class="vt2"><path d="M1 6l5-5h17v18l-5 5H1z" fill="#98a6b8" stroke="#444"/><path d="M1 6h17v18M18 6l5-5" fill="none" stroke="#444"/></svg>
            <i class="caret"></i>
            <svg viewBox="0 0 24 24" class="vt3"><path d="M20 7a10 10 0 1 0 2 7" fill="none" stroke="#444" stroke-width="1.500"/><path d="M22 2v7h-7" fill="none" stroke="#444"/></svg>
            <i class="caret"></i>
            <hr>
            <svg viewBox="0 0 24 24" class="vt2"><rect x="1" y="2" width="22" height="21" fill="#b4c0ce" stroke="#444"/><path d="M1 6h22M12 6v17M4 10h5M15 10h5M4 14h5M15 14h5M4 18h5M15 18h5" stroke="#444" stroke-dasharray="2 1"/></svg>
        </div>
    </div>

    <aside class="panel display">
        <div class="panelhead"><i class="x">×</i></div>
        <div class="paneltitle">显示设置</div>
        <div class="displaytabs"><span class="on">图元显示</span><span>楼层显示</span></div>
        <div class="layerwrap">
            <table class="layertable">
                <colgroup><col class="lc1"><col class="lc2"><col class="lc3"></colgroup>
                <tr><th>图层构件</th><th class="sel">显示图元</th><th>显示名称</th></tr>
                <tr class="l0"><td><i class="exp"></i>所有构件</td><td><i class="cb part"></i></td><td><i class="cb"></i></td></tr>
                <tr class="l1"><td><i class="exp"></i>轴线</td><td class="focus"><i class="cb on"></i></td><td><i class="cb dis"></i></td></tr>
                <tr class="l2"><td>轴网</td><td><i class="cb on"></i></td><td><i class="cb dis"></i></td></tr>
                <tr class="l2"><td>辅助轴线</td><td><i class="cb on"></i></td><td><i class="cb dis"></i></td></tr>
                <tr class="l1"><td><i class="exp"></i>柱</td><td><i class="cb part"></i></td><td><i class="cb"></i></td></tr>
                <tr class="l2"><td>柱</td><td><i class="cb on"></i></td><td><i class="cb"></i></td></tr>
                <tr class="l2"><td>构造柱</td><td><i class="cb on"></i></td><td><i class="cb"></i></td></tr>
                <tr class="l2"><td>砌体柱</td><td><i class="cb"></i></td><td><i class="cb"></i></td></tr>
                <tr class="l2"><td>约束边缘非阴...</td><td><i class="cb on"></i></td><td><i class="cb"></i></td></tr>
                <tr class="l1"><td><i class="exp"></i>墙</td><td><i class="cb part"></i></td><td><i class="cb"></i></td></tr>
                <tr class="l2"><td>剪力墙</td><td><i class="cb on"></i></td><td><i class="cb"></i></td></tr>
                <tr class="l2"><td>人防门框墙</td><td><i class="cb on"></i></td><td><i class="cb"></i></td></tr>
                <tr class="l2"><td>砌体墙</td><td><i class="cb on"></i></td><td><i class="cb"></i></td></tr>
                <tr class="l2"><td>砌体加筋</td><td><i class="cb"></i></td><td><i class="cb"></i></td></tr>
                <tr class="l2"><td>保温墙</td><td><i class="cb"></i></td><td><i class="cb"></i></td></tr>
                <tr class="l2"><td>暗梁</td><td><i class="cb"></i></td><td><i class="cb"></i></td></tr>
                <tr class="l2"><td>墙垛</td><td><i class="cb"></i></td><td><i class="cb"></i></td></tr>
                <tr class="l2"><td>幕墙</td><td><i class="cb"></i></td><td><i class="cb"></i></td></tr>
                <tr class="l1"><td><i class="exp"></i>门窗洞</td><td><i class="cb"></i></td><td><i class="cb"></i></td></tr>
                <tr class="l2"><td>门</td><td><i class="cb"></i></td><td><i class="cb"></i></td></tr>
                <tr class="l2"><td>窗</td><td><i class="cb"></i></td><td><i class="cb"></i></td></tr>
                <tr class="l2"><td>门联窗</td><td><i class="cb"></i></td><td><i class="cb"></i></td></tr>
                <tr class="l2"><td>墙洞</td><td><i class="cb"></i></td><td><i class="cb"></i></td></tr>
                <tr class="l2"><td>带形窗</td><td><i class="cb"></i></td><td><i class="cb"></i></td></tr>
                <tr class="l2"><td>带形洞</td><td><i class="cb"></i></td><td><i class="cb"></i></td></tr>
                <tr class="l2"><td>飘窗</td><td><i class="cb"></i></td><td><i class="cb"></i></td></tr>
                <tr class="l2"><td>老虎窗</td><td><i class="cb"></i></td><td><i class="cb"></i></td></tr>
                <tr class="l2"><td>过梁</td><td><i class="cb"></i></td><td><i class="cb"></i></td></tr>
                <tr class="l2"><td>壁龛</td><td><i class="cb"></i></td><td><i class="cb"></i></td></tr>
                <tr class="l1"><td><i class="exp"></i>梁</td><td><i class="cb on"></i></td><td><i class="cb"></i></td></tr>
                <tr class="l2"><td>梁</td><td><i class="cb on"></i></td><td><i class="cb"></i></td></tr>
                <tr class="l2"><td>连梁</td><td><i class="cb on"></i></td><td><i class="cb"></i></td></tr>
                <tr class="l2"><td>圈梁</td><td><i class="cb on"></i></td><td><i class="cb"></i></td></tr>
                <tr class="l1"><td><i class="exp"></i>板</td><td><i class="cb part"></i></td><td><i class="cb"></i></td></tr>
                <tr class="l2"><td></td><td><i class="cb part"></i></td><td><i class="cb"></i></td></tr>
            </table>
            <div class="scrollthumb"></div>
        </div>
        <div class="resetrow"><span>恢复默认设置</span></div>
    </aside>
</main>

<footer class="statusbar">
    <span class="coords">X = 1548 Y = 9494</span>
    <span class="s1">层高：3.6</span>
    <span class="s2">标高：0~3.6</span>
    <span class="s3">1(5)</span>
    <span class="s4">隐藏：0</span>
    <span class="sbtn b1"><svg viewBox="0 0 14 16"><path d="M3 2v12h9M6 9v5M6 9h4" fill="none" stroke="#444"/></svg></span>
    <span class="sbtn b2 on"><svg viewBox="0 0 20 20"><rect x="3" y="3" width="12" height="15" fill="#fff" stroke="#3f8fe0"/><rect x="3" y="2" width="3" height="4" fill="#f08a24"/></svg><i class="caret"></i></span>
    <span class="sbtn b3 dim"><svg viewBox="0 0 14 16"><path d="M2 1l10 14M12 1L2 15" stroke="#888"/></svg></span>
    <span class="sbtn b4"><svg viewBox="0 0 18 16"><path d="M2 14h14M2 14L12 2" stroke="#444"/></svg><i class="caret"></i></span>
    <span class="sbtn b5"><svg viewBox="0 0 18 16"><path d="M3 2v6M0.500 5h5" stroke="#444"/><rect x="6" y="8" width="8" height="6" fill="#444"/></svg><i class="caret"></i></span>
    <span class="sbtn b6">跨图层选择</span>
    <span class="sbtn b7">折线选择</span>
    <span class="hint">按鼠标左键指定第一个角点，或拾取构件图元</span>
    <span class="fps">1000 FPS</span>
</footer>

<div class="taskbar">
    <i class="orb"></i>
    <i class="taskbtn"></i><i class="taskbtn"></i><i class="taskbtn"></i><i class="taskbtn"></i>
    <span class="clock">下午 23:13</span>
    <i class="showdesk"></i>
</div>

<div class="speed">
    <div class="pill">
        <div class="up"><b>▲</b><span class="val">0</span><small>K/s</small></div>
        <div class="down"><b>▼</b><span class="val">0.8</span><small>K/s</small></div>
    </div>
    <svg class="gauge" viewBox="0 0 60 60">
        <circle cx="30" cy="30" r="29.500" fill="#39424d"/>
        <path d="M30 4A26 26 0 0 1 51 46" fill="none" stroke="#2fd3b8" stroke-width="1.500"/>
        <path d="M51 46A26 26 0 0 1 22 55" fill="none" stroke="#d8d84a" stroke-width="1.500"/>
        <path d="M22 55A26 26 0 0 1 5 24" fill="none" stroke="#e8a24a" stroke-width="1.500"/>
        <text x="26" y="39" class="pct">80</text><text x="41" y="39" class="pcts">%</text>
    </svg>
</div>
</body>
</html>
```

FILE: styles.css
```css
* {
    box-sizing: border-box;
}

html, body {
    margin: 0;
    height: 1048px;
    overflow: hidden;
}

body {
    font-family: "Noto Sans", "Noto Sans CJK SC", sans-serif;
    font-size: 12px;
    color: #111;
    background: #fff;
    position: relative;
}

.sprites {
    position: absolute;
    width: 0;
    height: 0;
}

.caret {
    display: inline-block;
    width: 0;
    height: 0;
    border-left: 3px solid transparent;
    border-right: 3px solid transparent;
    border-top: 3px solid #555;
    margin-left: 6px;
    vertical-align: middle;
}

/* title bar */
.titlebar {
    height: 23px;
    display: flex;
    align-items: center;
}

.quick {
    width: 667px;
    padding-left: 54px;
    display: flex;
    align-items: center;
    gap: 7px;
}

.qi {
    width: 16px;
    height: 16px;
    flex: none;
}

.quick .caret {
    margin: 0 0 0 -3px;
}

.qs {
    font-size: 18px;
    line-height: 16px;
    color: #3f7fc8;
    font-family: "Liberation Serif", serif;
    font-weight: bold;
    margin-left: 4px;
}

.qm {
    width: 6px;
    height: 5px;
    border-top: 1px solid #666;
    border-bottom: 3px solid #666;
}

.apptitle {
    white-space: nowrap;
    color: #222;
    letter-spacing: .22px;
}

.winbtns {
    margin-left: auto;
    display: flex;
    gap: 23px;
    padding-right: 13px;
    padding-top: 0;
}

.winbtns svg {
    width: 12px;
    height: 12px;
}

.logo {
    position: absolute;
    left: 9px;
    top: 8px;
    width: 28px;
    height: 28px;
}

/* ribbon tabs */
.tabs {
    height: 18px;
    padding-left: 49px;
    display: flex;
    align-items: stretch;
    background: #fff;
}

.tabs a {
    padding: 0 13px;
    line-height: 18px;
    color: #333;
    white-space: nowrap;
}

.tabs a.active {
    background: #5aabf5;
    color: #fff;
}

.tabs-right {
    margin-left: auto;
    display: flex;
    align-items: center;
    padding-right: 0;
}

.helpbox {
    width: 245px;
    height: 17px;
    border: 1px solid #c4c4c4;
    display: flex;
    align-items: center;
    justify-content: space-between;
    padding: 0 7px 0 2px;
    color: #c8c8c8;
    background: #fff;
}

.helpbox svg {
    width: 12px;
    height: 12px;
}

.avatar {
    width: 16px;
    height: 16px;
    margin-left: 9px;
}

.username {
    margin-left: 4px;
    width: 141px;
    font-size: 13px;
    white-space: nowrap;
}

.ti {
    width: 14px;
    height: 14px;
    margin-right: 9px;
}

.ti:last-child {
    margin-right: 6px;
}

.qmark {
    font-size: 16px;
    color: #8a8a8a;
    font-weight: bold;
    line-height: 14px;
}

.tabs-right .caret {
    margin: 0 7px 0 2px;
    border-top-color: #aaa;
}

/* ribbon */
.ribbon {
    height: 97px;
    display: flex;
    border-top: 1px solid #d6d6d6;
    border-bottom: 2px solid #9a9c9e;
    background: linear-gradient(to bottom, #fff 0%, #fff 55%, #e9ecee 100%);
}

.rgroup {
    display: flex;
    flex-direction: column;
    height: 92px;
    margin-top: 2px;
    border-right: 1px solid #d2d4d6;
}

.g1 { width: 146px; }
.g2 { width: 194px; }
.g3 { width: 277px; }
.g4 { width: 235px; }
.g5 { width: 119px; }
.g6 { width: 129px; }
.g7 { width: 273px; }

.rbody {
    height: 73px;
    display: flex;
    padding-top: 1px;
}

.g1 .rbody { padding-left: 8px; }
.g2 .rbody { padding-left: 9px; }
.g3 .rbody { padding-left: 9px; }
.g4 .rbody { padding-left: 8px; }
.g5 .rbody { padding-left: 12px; }
.g6 .rbody { padding-left: 5px; }
.g7 .rbody { padding-left: 4px; }

.rcol {
    display: flex;
    flex-direction: column;
}

.c-a { margin-left: 5px; }
.c2a { width: 79px; }
.c3a { width: 66px; }
.c3b { width: 112px; }
.c4a { width: 55px; }
.c4b { width: 53px; }
.c4c { width: 54px; }
.c7a { margin-left: 4px; width: 103px; }
.drawcol { margin-left: 8px; }

.ritem {
    height: 22.5px;
    display: flex;
    align-items: center;
    gap: 2px;
    white-space: nowrap;
    color: #222;
}

.ritem svg {
    width: 17px;
    height: 17px;
    flex: none;
}

.ritem .caret {
    margin-left: 6px;
}

.ritem.off {
    color: #b4b4b4;
}

.bigbtn {
    width: 58px;
    display: flex;
    flex-direction: column;
    align-items: center;
    text-align: center;
    line-height: 17px;
    padding-top: 2px;
}

.bigbtn svg {
    width: 30px;
    height: 32px;
    margin-bottom: 4px;
}

.bigbtn.selected {
    width: 40px;
    height: 66px;
    margin-top: 2px;
    background: #c5d6ee;
    padding-top: 0;
}

.bigbtn.selected svg {
    width: 28px;
    height: 30px;
    margin-bottom: 5px;
}

.bigbtn.off {
    color: #b4b4b4;
}

.drawbtn {
    width: 40px;
}

.rlabel {
    flex: 1;
    text-align: center;
    line-height: 19px;
    color: #333;
}

.rlabel .caret {
    border-left-width: 4px;
    border-right-width: 4px;
    border-top-width: 4px;
}

.rlabel.plain {
    padding-top: 2px;
}

/* combo strip */
.combobar {
    height: 27px;
    padding: 3px;
    display: flex;
    gap: 2px;
    background: #c8cbcf;
    border-right: 1px solid #999;
}

.combo {
    width: 98px;
    height: 22px;
    line-height: 22px;
    padding-left: 3px;
    background: #fff;
    position: relative;
}

.combo::after {
    content: "";
    position: absolute;
    right: 5px;
    top: 9px;
    border-left: 3px solid transparent;
    border-right: 3px solid transparent;
    border-top: 3px solid #555;
}

/* main area */
.workspace {
    height: 845px;
    display: flex;
    background: #eceded;
}

.panel {
    background: #fff;
    border: 1px solid #c2c4c8;
    border-top: 2px solid #a8aaae;
    display: flex;
    flex-direction: column;
}

.panelhead {
    height: 11px;
    flex: none;
    background: #d3d5d9;
    text-align: right;
    padding-right: 4px;
    line-height: 10px;
}

.x {
    font-style: normal;
    font-weight: bold;
    font-size: 11px;
    color: #888;
}

.paneltitle {
    height: 22px;
    flex: none;
    background: #f0f0f0;
    border-top: 1px solid #c8c8c8;
    border-bottom: 1px solid #c4c4c4;
    padding-left: 8px;
    line-height: 19px;
    color: #999;
    font-size: 12px;
}

.nav {
    width: 210px;
    flex: none;
}

.navtools {
    height: 28px;
    flex: none;
    background: #f0f0f0;
    border-bottom: 1px solid #c4c4c4;
    display: flex;
    align-items: center;
    padding: 0 1px 0 7px;
    gap: 4px;
}

.pin {
    width: 14px;
    height: 12px;
    margin-right: auto;
}

.navbtn {
    width: 24px;
    height: 22px;
    border: 1px solid #6aaef0;
    border-radius: 3px;
    background: #f4f8fc;
    display: flex;
    align-items: center;
    justify-content: center;
}

.navbtn svg {
    width: 14px;
    height: 14px;
}

.navtree {
    list-style: none;
    margin: 0;
    padding: 2px 0 0;
}

.navtree li {
    height: 24px;
    display: flex;
    align-items: center;
    padding-left: 3px;
    white-space: nowrap;
    color: #222;
}

.navtree li > svg {
    width: 15px;
    height: 13px;
    margin-right: 6px;
}

.navtree .sub {
    padding-left: 43px;
    position: relative;
}

.navtree .sub > svg {
    width: 17px;
    height: 15px;
    margin-right: 5px;
    position: relative;
}

.navtree .current {
    isolation: isolate;
}

.navtree .current::before {
    content: "";
    position: absolute;
    left: 40px;
    top: 1px;
    width: 94px;
    height: 21px;
    background: #c8d9f0;
    z-index: -1;
}

.vip {
    margin-left: 5px;
    width: 30px;
    height: 10px;
    background: #ffd966;
    color: #c9a020;
    font-family: "Liberation Serif", serif;
    font-size: 8px;
    line-height: 10px;
    text-align: center;
}

.midcol {
    width: 280px;
    flex: none;
    margin-left: 4px;
    display: flex;
    flex-direction: column;
    gap: 5px;
}

.comps {
    height: 419px;
    flex: none;
}

.props {
    flex: 1;
}

.paneltabs {
    height: 23px;
    flex: none;
    display: flex;
    background: #f0f0f0;
    border-top: 1px solid #c8c8c8;
    border-bottom: 1px solid #c4c4c4;
    padding-bottom: 0;
}

.paneltabs span {
    width: 65px;
    text-align: center;
    line-height: 21px;
    background: #dedede;
    color: #999;
    font-weight: 500;
}

.paneltabs .on {
    background: #f0f0f0;
    color: #333;
    font-weight: 700;
}

.comptools {
    height: 28px;
    flex: none;
    background: #f0f0f0;
    border-bottom: 1px solid #c4c4c4;
    display: flex;
    align-items: center;
    color: #333;
}

.comptools span {
    display: flex;
    align-items: center;
    gap: 5px;
    flex: none;
}

.comptools svg {
    width: 15px;
    height: 15px;
}

.comptools .t1 { width: 68px; padding-left: 6px; }
.comptools .t2 { width: 52px; }
.comptools .t3 { width: 52px; }
.comptools .t4 { width: 96px; }

.comptools .caret {
    margin-left: 1px;
}

.more {
    font-style: normal;
    font-size: 8px;
    color: #333;
}

.compsearch {
    height: 19px;
    flex: none;
    display: flex;
    align-items: center;
    justify-content: space-between;
    padding: 1px 8px 0 2px;
    border-bottom: 1px solid #c4c4c4;
    color: #aaa;
}

.compsearch svg {
    width: 12px;
    height: 12px;
}

.comptree {
    flex: 1;
    border-bottom: 1px solid #999;
}

.troot {
    height: 28px;
    line-height: 29px;
    padding-left: 23px;
    position: relative;
}

.tri {
    position: absolute;
    left: 10px;
    top: 12px;
    border-left: 6px solid transparent;
    border-bottom: 6px solid #333;
}

.tleaf {
    padding-left: 40px;
    height: 21px;
}

.tleaf span {
    display: block;
    width: 48px;
    height: 21px;
    line-height: 21px;
    background: #bcd3ef;
    text-align: center;
}

.proptable {
    width: 277px;
    table-layout: fixed;
    border-collapse: collapse;
    margin-top: 0;
}

.pc1 { width: 22px; }
.pc2 { width: 100px; }
.pc3 { width: 155px; }

.proptable td,
.proptable th {
    height: 21px;
    padding: 0 3px;
    border: 1px solid #d4d4d4;
    font-weight: normal;
    line-height: 20px;
    white-space: nowrap;
    overflow: hidden;
}

.proptable td:first-child,
.proptable th:first-child {
    border-left: 0;
    background: #f0f0f0;
}

.proptable th {
    background: #f0f0f0;
    color: #333;
}

.proptable th.sel {
    background: #7ab4f5;
    color: #fff;
}

.proptable .n {
    text-align: center;
    color: #333;
    padding: 0;
}

.proptable .n.cur {
    background: #7ab4f5;
    color: #fff;
    font-weight: bold;
}

.proptable .link {
    color: #3a5fd9;
}

.proptable .editing {
    outline: 2px solid #777;
    outline-offset: -2px;
}

.proptable .grey {
    background: #e8e8e8;
}

.steel {
    font-size: 9px;
    line-height: 0;
    vertical-align: 4px;
}

.exp {
    display: inline-block;
    width: 12px;
    height: 12px;
    border: 1px solid #777;
    border-radius: 2px;
    position: relative;
    vertical-align: -2px;
    background: #fff;
}

.exp::before {
    content: "";
    position: absolute;
    left: 2px;
    top: 4px;
    width: 6px;
    height: 1px;
    background: #444;
}

.exp.plus {
    margin: 0 6px 0 0;
}

.exp.plus::after {
    content: "";
    position: absolute;
    left: 4.500px;
    top: 2px;
    width: 1px;
    height: 6px;
    background: #444;
}

/* cad canvas */
.canvas {
    width: 1141px;
    flex: none;
    margin-left: 2px;
    position: relative;
}

.cad {
    display: block;
    width: 1141px;
    height: 845px;
}

.ln {
    fill: none;
    vector-effect: non-scaling-stroke;
}

.col {
    fill: url(#colfill);
    stroke: #e6d020;
    stroke-width: 1;
}

.big {
    font-family: "DejaVu Sans", sans-serif;
}

.thin {
    font-family: Roboto, sans-serif;
    font-weight: 100;
}

.yel { fill: #d8c818; }
.cy { fill: #20e0e8; }
.gr { fill: #18e018; }

.axis ellipse {
    fill: none;
    stroke: #0c8a0c;
}

.axis text {
    fill: #f0f0f0;
    font-family: "Liberation Sans", sans-serif;
    font-size: 16px;
    text-anchor: middle;
}

.axlbl {
    font-family: "Liberation Sans", sans-serif;
    font-size: 13px;
}

.viewtools {
    position: absolute;
    left: 1107px;
    top: 0;
    width: 33px;
    height: 228px;
    background: #a9acb1;
    border-left: 1px solid #ccc;
    display: flex;
    flex-direction: column;
    align-items: center;
    padding-top: 12px;
}

.viewtools svg {
    width: 24px;
    flex: none;
}

.vt1 { height: 22px; margin-bottom: 6px; }
.vt2 { height: 23px; margin-bottom: 6px; }
.vt3 { height: 22px; margin: 2px 0 6px; }

.viewtools .caret {
    margin: 0 0 6px;
    border-top-color: #333;
}

.viewtools hr {
    width: 28px;
    margin: 1px 0 5px;
    border: 0;
    border-top: 1px solid #777;
}

/* display settings */
.display {
    width: 280px;
    flex: none;
    margin-left: 3px;
}

.displaytabs {
    height: 27px;
    flex: none;
    display: flex;
    gap: 4px;
    padding: 4px 0 0 3px;
    border-bottom: 1px solid #c4c4c4;
}

.displaytabs span {
    width: 74px;
    text-align: center;
    line-height: 23px;
    background: #dedede;
    border-radius: 3px 3px 0 0;
    color: #555;
}

.displaytabs .on {
    background: #fff;
    color: #3f8fe0;
    border: 1px solid #c4c4c4;
    border-bottom: 0;
    height: 24px;
}

.layerwrap {
    margin: 4px 2px 0 2px;
    height: 739px;
    border: 1px solid #ccc;
    border-top: 0;
    overflow: hidden;
    position: relative;
}

.layertable {
    width: 258px;
    table-layout: fixed;
    border-collapse: collapse;
}

.lc1 { width: 132px; }
.lc2 { width: 64px; }
.lc3 { width: 62px; }

.layertable th,
.layertable td {
    height: 21px;
    padding: 0;
    border: 1px solid #d4d4d4;
    font-weight: normal;
    text-align: center;
    line-height: 20px;
    white-space: nowrap;
    overflow: hidden;
}

.layertable th {
    background: #f0f0f0;
    color: #333;
}

.layertable th.sel {
    background: #7ab4f5;
    color: #fff;
}

.layertable td:first-child {
    text-align: left;
    position: relative;
}

.l0 td:first-child {
    padding-left: 2px;
}

.l0 .exp {
    margin-right: 7px;
}

.l1 td:first-child {
    padding-left: 12px;
}

.l1 .exp {
    margin-right: 6px;
}

.l2 td:first-child {
    padding-left: 41px;
}

.l2 td:first-child::before {
    content: "";
    position: absolute;
    left: 18px;
    top: 10px;
    width: 16px;
    border-top: 1px solid #ddd;
}

.l2 td:first-child::after {
    content: "";
    position: absolute;
    left: 18px;
    top: 0;
    height: 21px;
    border-left: 1px solid #ddd;
}

.cb {
    display: inline-block;
    width: 13px;
    height: 13px;
    border: 1px solid #8a8a8a;
    border-radius: 2px;
    background: #fff;
    vertical-align: middle;
    position: relative;
}

.cb.dis {
    background: #eee;
    border-color: #bbb;
}

.cb.on {
    background: #5ba4f5;
    border-color: #5ba4f5;
}

.cb.on::after {
    content: "";
    position: absolute;
    left: 3px;
    top: 1px;
    width: 5px;
    height: 7px;
    border: solid #fff;
    border-width: 0 2px 2px 0;
    transform: rotate(45deg);
}

.cb.part {
    border-color: #666;
}

.cb.part::after {
    content: "";
    position: absolute;
    inset: 1px;
    background: #7ab4f5;
    border-radius: 1px;
}

.layertable td.focus {
    outline: 2px solid #777;
    outline-offset: -2px;
}

.scrollthumb {
    position: absolute;
    right: 4px;
    top: 14px;
    width: 8px;
    height: 237px;
    background: #c8c8c8;
    border-radius: 4px;
}

.resetrow {
    padding: 7px 8px 0 0;
    text-align: right;
}

.resetrow span {
    display: inline-block;
    width: 90px;
    height: 22px;
    line-height: 20px;
    border: 1px solid #ccc;
    border-radius: 2px;
    text-align: center;
    color: #666;
}

/* status bar */
.statusbar {
    height: 30px;
    display: flex;
    align-items: center;
    background: #dedfe2;
    color: #444;
    position: relative;
    white-space: nowrap;
}

.coords { width: 265px; padding-left: 2px; font-size: 13px; }
.s1 { width: 84px; }
.s2 { width: 132px; }
.s3 { width: 103px; }
.s4 { width: 103px; }

.sbtn {
    height: 25px;
    margin-right: 3px;
    background: #d0d1d4;
    border: 1px solid #9a9a9a;
    display: flex;
    align-items: center;
    justify-content: center;
    color: #333;
    flex: none;
}

.sbtn svg {
    width: 14px;
    height: 16px;
}

.sbtn .caret {
    margin-left: 3px;
    border-top-color: #333;
}

.sbtn.on {
    background: #fff;
    border: 1px solid #3f8fe0;
}

.sbtn.on svg {
    width: 18px;
    height: 20px;
}

.sbtn.dim {
    background: #dedfe2;
}

.b1 { width: 25px; }
.b2 { width: 36px; }
.b3 { width: 25px; margin-left: 2px; }
.b4 { width: 36px; margin-left: 3px; }
.b5 { width: 36px; }
.b6 { width: 73px; }
.b7 { width: 61px; }

.hint {
    margin-left: 3px;
    color: #333;
}

.fps {
    position: absolute;
    left: 1840px;
    top: 8px;
    color: #666;
}

/* taskbar, only its top edge is in frame */
.taskbar {
    height: 8px;
    background: linear-gradient(to bottom, #3a4654 0, #3a4654 1px, #8597ad 1px);
    position: relative;
    display: flex;
    padding-left: 60px;
    gap: 3px;
    overflow: hidden;
}

.orb {
    position: absolute;
    left: 12px;
    top: 1px;
    width: 30px;
    height: 30px;
    border-radius: 50%;
    background: #b4c8dc;
    border: 1px solid #6a7f96;
}

.taskbtn {
    width: 158px;
    margin-top: 1px;
    background: linear-gradient(to bottom, #e6e9ec, #c4ccd6);
    border: 1px solid #3a4654;
}

.clock {
    position: absolute;
    left: 1830px;
    top: 1px;
    color: #fff;
    font-size: 12px;
}

.showdesk {
    position: absolute;
    right: 0;
    top: 1px;
    width: 13px;
    height: 8px;
    background: #9aa8ba;
    border: 1px solid #5a6a7a;
}

/* floating net speed widget */
.speed {
    position: absolute;
    left: 1795px;
    top: 974px;
    width: 120px;
    height: 60px;
}

.pill {
    position: absolute;
    left: 0;
    top: 9px;
    width: 75px;
    height: 42px;
    background: rgba(47, 58, 71, .94);
    border-radius: 20px 0 0 20px;
    color: #fff;
    font-size: 11px;
}

.pill div {
    width: 56px;
    height: 21px;
    display: flex;
    align-items: center;
    padding-left: 11px;
}

.pill b {
    font-size: 8px;
    font-weight: normal;
}

.up b { color: #4aa8e8; }
.down b { color: #2fb84a; }

.pill .val {
    margin-left: auto;
    font-size: 12px;
}

.pill small {
    font-size: 9px;
    color: #aaa;
    margin-left: 1px;
    width: 15px;
    flex: none;
}

.gauge {
    position: absolute;
    left: 59px;
    top: 0;
    width: 60px;
    height: 60px;
}

.pct {
    font-size: 25px;
    fill: #fff;
    font-weight: 300;
    text-anchor: middle;
    font-family: Roboto, sans-serif;
}

.pcts {
    font-size: 9px;
    fill: #fff;
    font-family: Roboto, sans-serif;
}
```
